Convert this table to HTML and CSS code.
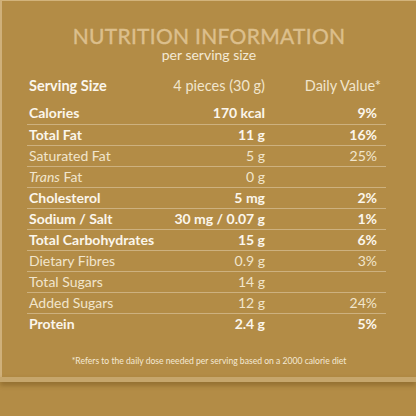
FILE: index.html
```
<!DOCTYPE html>
<html lang="en">
<head>
  <meta charset="UTF-8">
  <meta name="viewport" content="width=device-width, initial-scale=1.0">
  <title>Nutrition Information</title>
  <link rel="stylesheet" href="styles.css">
</head>
<body>
  <div class="panel">
    <h1>NUTRITION INFORMATION</h1>
    <p class="sub">per serving size</p>
    <table class="facts">
      <colgroup>
        <col class="c-label">
        <col class="c-value">
        <col class="c-dv">
      </colgroup>
      <tr class="head">
        <td>Serving Size</td>
        <td>4 pieces (30 g)</td>
        <td>Daily Value*</td>
      </tr>
      <tr class="bold"><td>Calories</td><td>170 kcal</td><td>9%</td></tr>
      <tr class="bold"><td>Total Fat</td><td>11 g</td><td>16%</td></tr>
      <tr><td>Saturated Fat</td><td>5 g</td><td>25%</td></tr>
      <tr><td><i>Trans</i> Fat</td><td>0 g</td><td></td></tr>
      <tr class="bold"><td>Cholesterol</td><td>5 mg</td><td>2%</td></tr>
      <tr class="bold"><td>Sodium / Salt</td><td>30 mg / 0.07 g</td><td>1%</td></tr>
      <tr class="bold"><td>Total Carbohydrates</td><td>15 g</td><td>6%</td></tr>
      <tr><td>Dietary Fibres</td><td>0.9 g</td><td>3%</td></tr>
      <tr><td>Total Sugars</td><td>14 g</td><td></td></tr>
      <tr><td>Added Sugars</td><td>12 g</td><td>24%</td></tr>
      <tr class="bold"><td>Protein</td><td>2.4 g</td><td>5%</td></tr>
    </table>
    <p class="note">*Refers to the daily dose needed per serving based on a 2000 calorie diet</p>
  </div>
  <div class="ledge"></div>
</body>
</html>
```

FILE: styles.css
```
* {
  margin: 0;
  padding: 0;
  box-sizing: border-box;
}

body {
  background: #b38c46;
  font-family: 'Lato', 'Open Sans', sans-serif;
  width: 416px;
  height: 416px;
  overflow: hidden;
}

.panel {
  height: 377px;
  border-top: 1px solid #d2b37c;
  border-left: 2px solid #cfb07a;
  padding-top: 24px;
}

h1 {
  color: #dcbf8c;
  text-align: center;
  font-size: 21px;
  line-height: 22px;
  font-weight: 400;
  letter-spacing: 0.3px;
  -webkit-text-stroke: 0.4px #dcbf8c;
}

.sub {
  color: #f3e9d4;
  text-align: center;
  font-size: 14px;
  line-height: 17px;
  margin-top: -1px;
}

.facts {
  margin: 13px 0 0 25px;
  width: 359px;
  table-layout: fixed;
  border-collapse: collapse;
  color: #f1e5cc;
  font-size: 14px;
}

.c-label { width: 140px; }
.c-value { width: 98px; }
.c-dv { width: 121px; }

.facts td {
  height: 21px;
  line-height: 20px;
  padding: 0;
  white-space: nowrap;
}

.facts td:first-child {
  padding-left: 2px;
}

.facts td:nth-child(2),
.facts td:nth-child(3) {
  text-align: right;
}

.facts td:nth-child(3) {
  padding-right: 9px;
}

.facts tr {
  border-bottom: 1px solid #cdb17f;
}

.facts tr:last-child {
  border-bottom: none;
}

.facts tr.head {
  border-bottom: none;
}

.facts tr.head td {
  height: 27px;
  vertical-align: top;
  font-size: 14.5px;
}

.facts tr.head td:first-child {
  font-weight: 700;
  color: #fbf6ec;
}

.facts tr.head td:nth-child(3) {
  padding-right: 5px;
}

.facts tr.bold td {
  font-weight: 700;
  color: #fbf6ec;
}

.note {
  margin-top: 20px;
  text-align: center;
  color: #f3e9d4;
  font-size: 8.6px;
  line-height: 14px;
}

.ledge {
  height: 5px;
  background: #c6a66c;
  box-shadow: 0 3px 5px rgba(90, 60, 10, 0.45);
}
```
